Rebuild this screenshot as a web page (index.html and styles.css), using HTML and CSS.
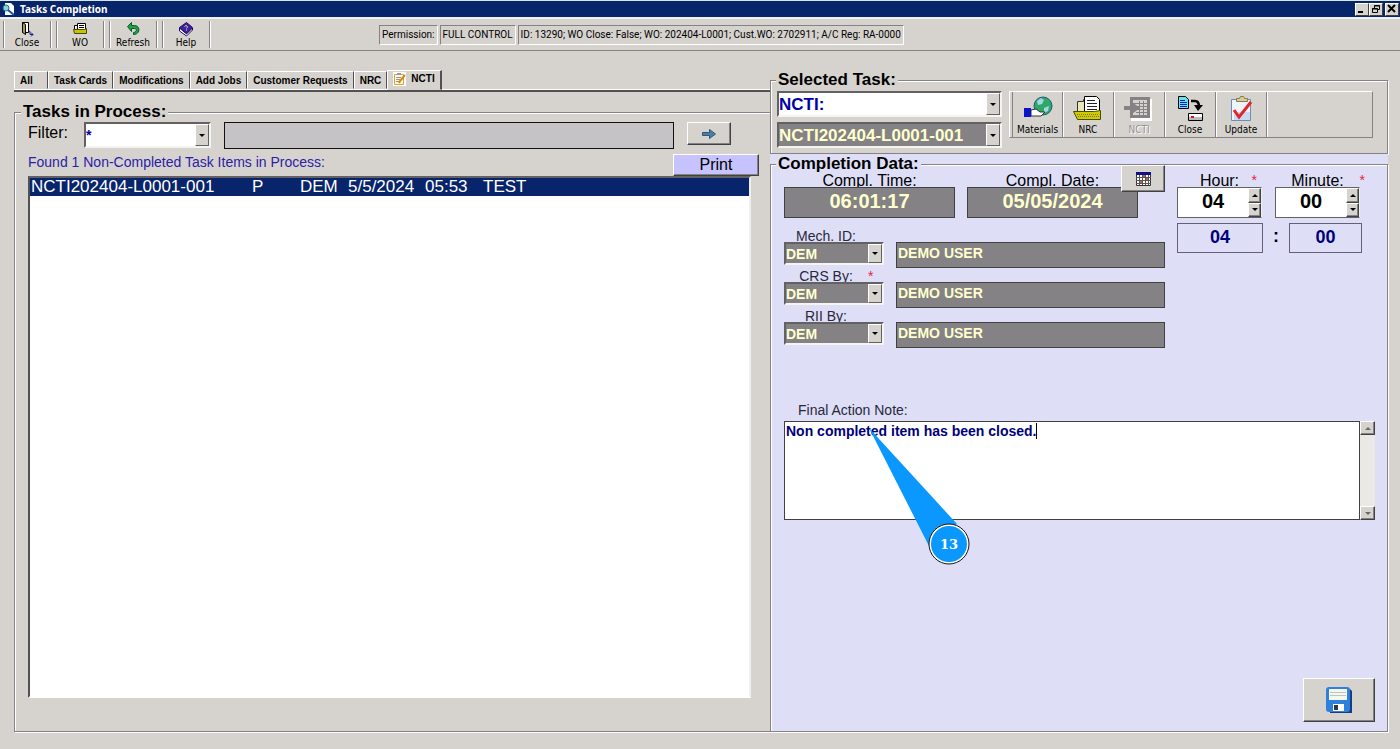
FILE: index.html
```html
<!DOCTYPE html>
<html lang="en">
<head>
  <meta charset="UTF-8">
  <meta name="viewport" content="width=device-width, initial-scale=1.0">
  <title>Tasks Completion</title>
  <link rel="stylesheet" href="styles.css">
</head>
<body>
  <!-- Title bar -->
  <header class="titlebar">
    <svg class="app-icon" width="13" height="14" viewBox="0 0 13 14"><path fill="#fff" d="M3 1h6l3 3v9H3z"/><circle cx="4" cy="6" r="3" fill="#7fd4dc" stroke="#28708c"/><path d="M6 8l6 5" stroke="#1b4f9c" stroke-width="2"/></svg>
    <h1>Tasks Completion</h1>
    <div class="window-buttons">
      <button type="button" aria-label="Minimize"><svg width="11" height="10" viewBox="0 0 11 10"><path d="M2 7h5v2H2z"/></svg></button>
      <button type="button" aria-label="Restore"><svg width="11" height="10" viewBox="0 0 11 10"><path fill="none" stroke="#000" d="M4.500 4V1.500h5v4H8M2.500 4.500h5v4h-5zM4 2h6M2 5h6"/></svg></button>
      <button type="button" class="win-close" aria-label="Close window"><svg width="11" height="10" viewBox="0 0 11 10"><path d="M2 1l7 7M9 1L2 8" stroke="#000" stroke-width="2"/></svg></button>
    </div>
  </header>

  <!-- Main toolbar -->
  <nav class="toolbar">
    <button type="button" class="tool">
      <svg width="16" height="16" viewBox="0 0 16 16"><path fill="#fff" stroke="#000" d="M3.500 1.500h6v10h-6z"/><path fill="#a8a020" stroke="#000" d="M3.500 1.500l3 2v10l-3-2z"/><path fill="none" stroke="#1c1c8c" d="M9 9.500l2 1v3h3M12 11.500l2 2-2 2"/></svg>
      Close
    </button>
    <button type="button" class="tool">
      <svg width="16" height="16" viewBox="0 0 16 16"><path fill="#fff" stroke="#000" d="M5.500 8V2.500h8V9M2.500 9V4.500h3"/><path stroke="#000" d="M7 4.500h5M7 6.500h5"/><path fill="#c9c400" stroke="#4a4800" d="M1.500 8.500h11l2-1v5h-12z"/></svg>
      WO
    </button>
    <button type="button" class="tool">
      <svg width="16" height="16" viewBox="0 0 16 16"><path fill="#1fa04a" stroke="#0a5a26" d="M2.500 5.500l4-4v3h3c6 0 6 9-1 9v-2c3 0 4-4 1-4h-3v3z"/></svg>
      Refresh
    </button>
    <button type="button" class="tool">
      <svg width="16" height="16" viewBox="0 0 16 16"><path fill="#3f20a8" stroke="#1c0c60" d="M1.500 6.500l7-5 6 5-6 6z"/><path fill="#fff" stroke="#1c0c60" d="M1.500 7v3l7 5 6-6V7l-6 6z"/><path fill="none" stroke="#ffe860" d="M6.500 5.500c2-2 4 0 2 2M8 9h1"/></svg>
      Help
    </button>
    <div class="status">
      <span>Permission:</span>
      <span>FULL CONTROL</span>
      <span>ID: 13290; WO Close: False; WO: 202404-L0001; Cust.WO: 2702911; A/C Reg: RA-0000</span>
    </div>
  </nav>

  <main class="workspace">
    <!-- Left side: task list -->
    <section class="left">
      <div class="tabs" role="tablist">
        <button type="button" role="tab" class="tab tab-all">All</button>
        <button type="button" role="tab" class="tab">Task Cards</button>
        <button type="button" role="tab" class="tab">Modifications</button>
        <button type="button" role="tab" class="tab">Add Jobs</button>
        <button type="button" role="tab" class="tab">Customer Requests</button>
        <button type="button" role="tab" class="tab">NRC</button>
        <button type="button" role="tab" class="tab active" aria-selected="true">
          <svg width="13" height="14" viewBox="0 0 13 14"><path fill="#fff" d="M0 0h13v14H0z"/><path fill="#fff8dc" stroke="#d8a43c" d="M1.500 2.500h9v10h-9z"/><path stroke="#8e98a8" d="M3 5.500h5M3 7.500h4M3 9.500h3"/><path fill="#999" d="M4 1h4v2H4z"/><path d="M12 3l-5 6-1 2" fill="none" stroke="#d08a1c" stroke-width="2"/></svg>
          NCTI
        </button>
      </div>

      <fieldset class="group tasks">
        <legend>Tasks in Process:</legend>
        <div class="filter-row">
          <label class="label-lg" for="filter">Filter:</label>
          <span class="combo filter-combo">
            <select id="filter"><option>*</option></select><span class="arrow"></span>
          </span>
          <input class="filter-text" type="text" aria-label="Filter value" readonly>
          <button type="button" class="btn go" aria-label="Go">
            <svg width="16" height="10" viewBox="0 0 16 10"><path fill="#4d7ea8" stroke="#2e5878" d="M1.500 3.500h7v-3l6 4.500-6 4.500v-3h-7z"/></svg>
          </button>
        </div>
        <div class="found-row">
          <p>Found 1 Non-Completed Task Items in Process:</p>
          <button type="button" class="btn print">Print</button>
        </div>
        <div class="list">
          <table>
            <colgroup><col class="c-task"><col class="c-type"><col class="c-user"><col class="c-date"><col class="c-time"><col></colgroup>
            <tr class="selected">
              <td>NCTI202404-L0001-001</td><td>P</td><td>DEM</td><td>5/5/2024</td><td>05:53</td><td>TEST</td>
            </tr>
          </table>
        </div>
      </fieldset>
    </section>

    <!-- Right side: selected task -->
    <section class="right">
      <fieldset class="group selected-task">
        <legend>Selected Task:</legend>
        <div class="task-combos">
          <span class="combo">
            <select aria-label="Task type"><option>NCTI:</option></select><span class="arrow"></span>
          </span>
          <span class="combo dark">
            <select aria-label="Task number"><option>NCTI202404-L0001-001</option></select><span class="arrow"></span>
          </span>
        </div>
        <div class="task-tools">
          <button type="button" class="task-tool">
            <svg width="30" height="26" viewBox="0 0 30 26"><circle cx="20" cy="10" r="9" fill="#2fa866" stroke="#21587c"/><path fill="#9fd8e8" d="M14 5l4-3 3 2-2 4-4 1zM21 12l5-2-1 5-4 2z"/><path fill="#fff" stroke="#333" d="M8 14l5-1 4 3h5l-4 4H8z"/><path fill="#0a14c8" d="M1 12h7v9H1z"/></svg>
            Materials
          </button>
          <button type="button" class="task-tool">
            <svg width="30" height="26" viewBox="0 0 30 26"><path fill="#ece8b4" stroke="#333" d="M4.500 16V5.500h6v-2h5V16z"/><path fill="#fff" stroke="#000" d="M11.500 17V.500h12l3 3V17z"/><path stroke="#222" d="M14 4.500h8M14 7.500h10M14 10.500h10M14 13.500h10"/><path fill="#cfcb00" stroke="#4d4b00" d="M.500 15.500h21l6-1v9h-23z"/><path stroke="#77752a" stroke-dasharray="1 1" d="M4 18.500h22M5 20.500h21"/></svg>
            NRC
          </button>
          <button type="button" class="task-tool" disabled>
            <svg width="30" height="26" viewBox="0 0 30 26"><path fill="#fff" d="M7 3h21v22H7z"/><path fill="#848284" d="M6 1h20v21H6z"/><path fill="#d6d3ce" d="M9 4h14v15H9z"/><path stroke="#848284" d="M9 7.500h14M12 10.500h11M12 13.500h11M12 16.500h11M15.500 5v14M19.500 5v14"/><path fill="#848284" d="M0 10h8V6l8 6-8 6v-4H0z"/></svg>
            NCTI
          </button>
          <button type="button" class="task-tool">
            <svg width="30" height="26" viewBox="0 0 30 26"><path fill="#5fe4f4" stroke="#000" d="M3.500.500h7l3 3v9h-10z"/><path stroke="#0a14c8" stroke-width="1" d="M5 4.500h5M5 6.500h7M5 8.500h7M5 10.500h7"/><path fill="none" stroke="#000" stroke-width="2.500" d="M16 5h4c3 0 4 2 4 6"/><path d="M19 9h9l-5 6z"/><path fill="#fff" stroke="#000" d="M13.500 17.500h14v7h-14z"/><path fill="#bbb" d="M14 21h13v3H14z"/><path fill="#e01020" d="M16 20h3v2h-3z"/></svg>
            Close
          </button>
          <button type="button" class="task-tool">
            <svg width="30" height="26" viewBox="0 0 30 26"><path fill="#eef4fc" stroke="#6d8cb8" d="M5.500 3.500h19v21h-19z"/><path fill="#c8daf2" d="M8 16h16v8H8z"/><path fill="#d8cc98" stroke="#857b50" d="M10.500 5.500v-3h3l1-2h3l1 2h3v3z"/><path fill="none" stroke="#e02828" stroke-width="3" d="M8 14l5 7L25 6"/></svg>
            Update
          </button>
        </div>
      </fieldset>

      <div class="completion-bg">
        <fieldset class="group completion">
          <legend>Completion Data:</legend>
          <div class="completion-top">
            <div class="col-main">
              <div class="stamp-row">
                <div class="stamp">
                  <label for="ctime">Compl. Time:</label>
                  <input id="ctime" class="dark-field" type="text" value="06:01:17" readonly>
                </div>
                <div class="stamp">
                  <label for="cdate">Compl. Date:</label>
                  <input id="cdate" class="dark-field" type="text" value="05/05/2024" readonly>
                </div>
                <button type="button" class="btn calendar" aria-label="Calendar">
                  <svg width="15" height="14" viewBox="0 0 15 14"><path fill="#fff" stroke="#333" d="M.500.500h14v13H.500z"/><path fill="#10108c" d="M0 0h15v3H0z"/><path stroke="#555" d="M3.500 3v10M6.500 3v10M9.500 3v10M12.500 3v10M0 5.500h15M0 8.500h15M0 11.500h15"/><path fill="#d05848" d="M7 3h2v2H7zM10 6h2v2h-2zM4 9h2v2H4z"/></svg>
                </button>
              </div>

              <div class="person">
                <div class="person-label"><label for="mech">Mech. ID:</label></div>
                <div class="person-fields">
                  <span class="combo dark"><select id="mech"><option>DEM</option></select><span class="arrow"></span></span>
                  <input class="dark-field" type="text" aria-label="Mechanic name" value="DEMO USER" readonly>
                </div>
              </div>
              <div class="person">
                <div class="person-label"><label for="crs">CRS By:</label><span class="req">*</span></div>
                <div class="person-fields">
                  <span class="combo dark"><select id="crs"><option>DEM</option></select><span class="arrow"></span></span>
                  <input class="dark-field" type="text" aria-label="CRS name" value="DEMO USER" readonly>
                </div>
              </div>
              <div class="person">
                <div class="person-label"><label for="rii">RII By:</label></div>
                <div class="person-fields">
                  <span class="combo dark"><select id="rii"><option>DEM</option></select><span class="arrow"></span></span>
                  <input class="dark-field" type="text" aria-label="RII name" value="DEMO USER" readonly>
                </div>
              </div>
            </div>

            <div class="col-time">
              <div class="spin-row">
                <div class="spin-col">
                  <label for="hour">Hour:</label><span class="req">*</span>
                  <span class="spin">
                    <input id="hour" type="text" value="04">
                    <span class="spin-buttons"><button type="button" class="btn up" aria-label="Hour up"></button><button type="button" class="btn down" aria-label="Hour down"></button></span>
                  </span>
                </div>
                <div class="spin-col">
                  <label for="minute">Minute:</label><span class="req req-out">*</span>
                  <span class="spin">
                    <input id="minute" type="text" value="00">
                    <span class="spin-buttons"><button type="button" class="btn up" aria-label="Minute up"></button><button type="button" class="btn down" aria-label="Minute down"></button></span>
                  </span>
                </div>
              </div>
              <div class="total-row">
                <output class="total-hour">04</output>
                <span>:</span>
                <output class="total-minute">00</output>
              </div>
            </div>
          </div>

          <label class="note-label" for="note">Final Action Note:</label>
          <div class="note">
            <textarea id="note" spellcheck="false">Non completed item has been closed.</textarea>
            <span class="caret"></span>
            <div class="scrollbar">
              <button type="button" class="btn up" aria-label="Scroll up" disabled></button>
              <button type="button" class="btn down" aria-label="Scroll down" disabled></button>
            </div>
            <svg class="callout" width="102" height="138" viewBox="0 0 102 138">
              <path fill="#0a98ff" d="M0 1l88 96-28 22z"/>
              <circle cx="80" cy="117" r="20" fill="#fff"/>
              <circle cx="80" cy="117" r="19" fill="#0a98ff" stroke="#fff" stroke-width="2"/>
              <circle cx="80" cy="117" r="20" fill="none" stroke="#111" stroke-width="1"/>
              <text x="80" y="122" text-anchor="middle">13</text>
            </svg>
          </div>

          <button type="button" class="btn save" aria-label="Save">
            <svg width="26" height="26" viewBox="0 0 26 26"><path fill="#123e86" d="M3 2h21l2 2v22H4z"/><rect width="24" height="25" rx="3" fill="#2f80dc"/><path fill="#f4f6f0" d="M3 2h18v11H3z"/><path stroke="#bcc4c0" d="M4 5.500h16M4 8.500h16"/><path fill="#fff" d="M7 17h11v7H7z"/><path fill="#303848" d="M8 18h4v5H8z"/></svg>
          </button>
        </fieldset>
      </div>
    </section>
  </main>
</body>
</html>
```
FILE: styles.css
```css
* {
  margin: 0;
  padding: 0;
  box-sizing: border-box;
}

body {
  display: flex;
  flex-direction: column;
  min-height: 100vh;
  font-family: "Liberation Sans", Arial, sans-serif;
  font-size: 14px;
  color: #000;
  background-color: #d6d3ce;
}

button, input, select, textarea {
  font: inherit;
  color: inherit;
  border-radius: 0;
  outline: none;
}

svg {
  flex: none;
}

/* Title bar */
.titlebar {
  display: flex;
  align-items: center;
  height: 17px;
  padding: 0 1px 0 2px;
  border-top: 1px solid #d8e8f0;
  background-color: #08246b;
  color: #fff;
}

.titlebar h1 {
  margin-left: 5px;
  font: bold 10px "Noto Sans", sans-serif;
  flex: 1;
}

.window-buttons {
  display: flex;
}

.window-buttons button {
  display: flex;
  width: 14px;
  height: 13px;
  background-color: #d6d3ce;
  border: 1px solid;
  border-color: #fff #404040 #404040 #fff;
}

.window-buttons .win-close {
  margin-left: 2px;
}

/* Toolbar */
.toolbar {
  display: flex;
  height: 34px;
  padding: 2px 3px;
  border-top: 2px solid #eef2f4;
  border-bottom: 1px solid #848284;
}

.tool, .task-tool {
  display: flex;
  flex-direction: column;
  align-items: center;
  background: none;
  border: none;
  font-family: "DejaVu Sans Condensed", "DejaVu Sans", sans-serif;
  font-size: 10px;
  line-height: 12px;
}

.tool {
  width: 48px;
  margin-right: 5px;
  border-left: 1px solid #848284;
  border-right: 1px solid #848284;
  box-shadow: inset 1px 0 #fff, 1px 0 #fff;
}

.status {
  display: flex;
  align-items: center;
  gap: 2px;
  margin-left: 164px;
  font-family: Roboto, sans-serif;
  font-size: 10px;
  white-space: nowrap;
}

.status span {
  height: 20px;
  padding: 0 2px;
  line-height: 18px;
  border: 1px solid;
  border-color: #848284 #fff #fff #848284;
}

/* Layout */
.workspace {
  display: flex;
  flex: 1;
  padding: 20px 12px 17px 14px;
}

.left {
  display: flex;
  flex-direction: column;
  flex: 756 1 0;
}

.right {
  display: flex;
  flex-direction: column;
  flex: 618 1 0;
}

/* Etched group boxes */
.group {
  min-width: 0;
  border: 1px solid #848284;
  box-shadow: inset 1px 1px #fff, 1px 1px #fff;
}

.group legend {
  height: 18px;
  padding: 0 2px;
  font-size: 17px;
  font-weight: bold;
  line-height: 18px;
  background-color: #d6d3ce;
}

/* Tabs */
.tabs {
  display: flex;
  align-items: flex-end;
  height: 21px;
  margin-bottom: 11px;
  border-bottom: 2px solid #525052;
  box-shadow: inset 0 -1px #fff;
}

.tab {
  height: 18px;
  margin-bottom: 1px;
  padding: 0 5px;
  font-size: 10px;
  font-weight: bold;
  background: none;
  border: 1px solid;
  border-color: #fff #525052 transparent #fff;
}

.tab-all {
  width: 34px;
  text-align: left;
}

.tab.active {
  display: flex;
  align-items: center;
  gap: 5px;
  height: 20px;
  margin-bottom: 0;
  padding: 0 5px 3px;
  background-color: #d6d3ce;
  border-right-width: 2px;
}

/* Buttons and combos */
.btn {
  display: flex;
  align-items: center;
  justify-content: center;
  background-color: #d6d3ce;
  border: 1px solid;
  border-color: #fff #424142 #424142 #fff;
  box-shadow: inset -1px -1px #848284;
}

.combo {
  display: flex;
  background-color: #fff;
  border: 2px solid;
  border-color: #636163 #f4f4f0 #f4f4f0 #636163;
  color: #0000a8;
  font-weight: bold;
}

.combo select {
  flex: 1;
  min-width: 0;
  appearance: none;
  border: none;
  background: none;
}

.arrow {
  display: flex;
  width: 14px;
  align-items: center;
  justify-content: center;
  background-color: #d6d3ce;
  border: 1px solid;
  border-color: #fff #636163 #636163 #fff;
}

.arrow::after, .up::after, .down::after {
  content: "";
  border: 3px solid transparent;
  border-top-color: #000;
  border-bottom: none;
}

.up::after {
  border-top: none;
  border-bottom: 3px solid #000;
}

.combo.dark, .dark-field {
  background-color: #848284;
  color: #ffffce;
}

.dark-field {
  border: 1px solid #424142;
  font-weight: bold;
}

/* Tasks in process */
.tasks {
  display: flex;
  flex-direction: column;
  flex: 1;
  padding: 1px 19px 33px 13px;
  border-right: none;
}

.tasks legend {
  margin-left: -7px;
}

.filter-row {
  display: flex;
  align-items: flex-start;
}

.label-lg {
  width: 56px;
  font-size: 16px;
  line-height: 22px;
}

.filter-combo {
  width: 127px;
  height: 26px;
}

.filter-text {
  flex: 1;
  height: 27px;
  margin: 0 13px;
  background-color: #c6c3c6;
  border: 1px solid #111;
}

.go {
  width: 44px;
  height: 23px;
  margin-right: 20px;
}

.found-row {
  display: flex;
  justify-content: space-between;
  margin: 5px -8px 0 0;
}

.found-row p {
  color: #2c1ca8;
  line-height: 17px;
}

.print {
  width: 86px;
  height: 22px;
  font-size: 16px;
  background-color: #c6c3ff;
}

.list {
  flex: 1;
  background-color: #fff;
  border: 2px solid;
  border-color: #636163 #efefef #fff #525052;
}

.list table {
  width: 100%;
  table-layout: fixed;
  border-collapse: collapse;
  font-size: 17px;
  line-height: 18px;
}

.c-task {
  width: 221px;
}

.c-type, .c-user {
  width: 48px;
}

.c-date {
  width: 77px;
}

.c-time {
  width: 58px;
}

.list td {
  padding-left: 1px;
}

.list .selected {
  background-color: #08246b;
  color: #fff;
}

/* Selected task */
.selected-task {
  display: flex;
  gap: 7px;
  height: 83px;
  padding: 2px 14px 0 6px;
}

.selected-task legend {
  margin-left: -1px;
}

.task-combos {
  display: flex;
  flex-direction: column;
  gap: 5px;
  width: 225px;
  font-size: 17px;
}

.task-combos .combo {
  height: 26px;
}

.task-tools {
  display: flex;
  flex: 1;
  height: 47px;
  padding-left: 2px;
  border: 1px solid;
  border-color: #fff #848284 #848284 #fff;
}

.task-tool {
  width: 51px;
  padding-top: 4px;
  gap: 2px;
  border-right: 1px solid #848284;
  box-shadow: 1px 0 #fff;
}

.task-tool:first-child {
  border-left: 1px solid #848284;
}

.task-tool:disabled {
  color: #949294;
  text-shadow: 1px 1px #fff;
}

/* Completion data */
.completion-bg {
  display: flex;
  flex: 1;
  padding-top: 1px;
  background-color: #dedff7;
}

.completion {
  display: flex;
  flex-direction: column;
  flex: 1;
  padding: 0 12px 9px 13px;
}

.completion legend {
  margin-left: -8px;
  background-color: #dedff7;
}

.completion-top {
  display: flex;
  gap: 12px;
}

.col-main {
  width: 381px;
}

.stamp-row {
  display: flex;
  gap: 12px;
  margin-bottom: 11px;
  position: relative;
}

.stamp, .spin-col {
  display: flex;
  flex-direction: column;
}

.stamp {
  width: 171px;
}

/* The fields below cover the descenders of their labels */
.stamp label, .spin-col label {
  height: 14px;
  font-size: 16px;
  line-height: 16px;
  text-align: center;
}

.stamp input {
  width: 100%;
  height: 31px;
  padding-bottom: 3px;
  font-size: 20px;
  text-align: center;
}

.calendar {
  position: absolute;
  top: -8px;
  right: 0;
  width: 44px;
  height: 27px;
}

.person {
  margin-bottom: 1px;
}

.person-label {
  display: flex;
  height: 13px;
  line-height: 15px;
}

.person-label label {
  width: 84px;
  text-align: center;
  color: #29283a;
}

.req {
  color: #e8203c;
}

.person-fields {
  display: flex;
  align-items: flex-start;
  gap: 12px;
}

.person-fields .combo {
  width: 100px;
  height: 23px;
}

.person-fields input {
  flex: 1;
  height: 26px;
  padding: 0 1px 5px;
}

/* Hour and minute */
.col-time {
  width: 185px;
}

.spin-row {
  display: flex;
  gap: 13px;
}

.spin-col {
  position: relative;
  width: 85px;
}

.spin-col .req {
  position: absolute;
  top: -1px;
  right: 5px;
}

.spin-col .req-out {
  right: -5px;
}

.spin {
  display: flex;
  height: 31px;
  background-color: #fff;
  border: 1px solid #636163;
  border-right-color: #efefef;
}

.spin input {
  flex: 1;
  min-width: 0;
  padding-bottom: 3px;
  border: none;
  font-size: 20px;
  font-weight: bold;
  text-align: center;
}

.spin-buttons {
  display: flex;
  flex-direction: column;
  width: 13px;
}

.spin-buttons .btn {
  flex: 1;
}

.total-row {
  display: flex;
  justify-content: space-between;
  margin-top: 5px;
  font-size: 18px;
  font-weight: bold;
  line-height: 26px;
  text-align: center;
}

.total-row output {
  height: 30px;
  border: 1px solid #636173;
  color: #00007b;
}

.total-hour {
  width: 86px;
}

.total-minute {
  width: 73px;
}

/* Final action note */
.note-label {
  margin: 54px 0 4px 14px;
  line-height: 14px;
  color: #29283a;
}

.note {
  display: flex;
  position: relative;
  height: 99px;
}

.note textarea {
  flex: 1;
  padding: 0 1px;
  resize: none;
  overflow: hidden;
  border: 1px solid #424142;
  background-color: #fff;
  color: #00007b;
  font-weight: bold;
  line-height: 18px;
}

.caret {
  position: absolute;
  top: 2px;
  left: 252px;
  width: 1px;
  height: 16px;
  background-color: #000;
}

.scrollbar {
  display: flex;
  flex-direction: column;
  justify-content: space-between;
  width: 15px;
  background-color: #ebe9e6;
}

.scrollbar .btn {
  height: 14px;
}

.scrollbar .btn::after {
  opacity: 0.5;
}

.callout {
  position: absolute;
  top: 6px;
  left: 85px;
}

.callout text {
  fill: #fff;
  font: bold 13px "DejaVu Serif", serif;
}

.save {
  width: 72px;
  height: 44px;
  margin: auto 0 0 auto;
}
```
